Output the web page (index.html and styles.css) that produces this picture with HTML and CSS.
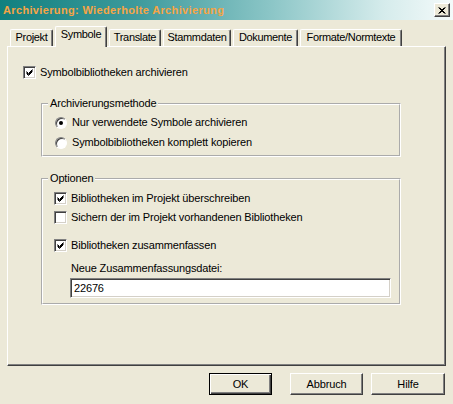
FILE: index.html
```html
<!DOCTYPE html>
<html>
<head>
<meta charset="utf-8">
<title>Archivierung</title>
<link rel="stylesheet" href="styles.css">
</head>
<body>
<div class="titlebar">
  <span class="title">Archivierung: Wiederholte Archivierung</span>
  <span class="close"><svg width="8" height="7" viewBox="0 0 8 7"><path d="M0.5 0.5L6.5 6.5M1.5 0.5L7.5 6.5M6.5 0.5L0.5 6.5M7.5 0.5L1.5 6.5" stroke="#000" stroke-width="1" fill="none"/></svg></span>
</div>
<div class="tabs">
  <div class="tab t1">Projekt</div>
  <div class="tab t2 active">Symbole</div>
  <div class="tab t3">Translate</div>
  <div class="tab t4">Stammdaten</div>
  <div class="tab t5">Dokumente</div>
  <div class="tab t6">Formate/Normtexte</div>
</div>
<div class="panel">
  <div class="row"><span class="box"><svg width="7" height="7" viewBox="0 0 7 7"><path d="M0.5 2.5L2.5 4.5L6.5 0.5M0.5 3.5L2.5 5.5L6.5 1.5M0.5 4.5L2.5 6.5L6.5 2.5" stroke="#000" stroke-width="1" fill="none"/></svg></span>Symbolbibliotheken archivieren</div>
  <fieldset class="group g1">
    <legend>Archivierungsmethode</legend>
    <div class="gbody">
      <div class="row"><span class="radio"><span class="dot"></span></span>Nur verwendete Symbole archivieren</div>
      <div class="row r2"><span class="radio"></span>Symbolbibliotheken komplett kopieren</div>
    </div>
  </fieldset>
  <fieldset class="group g2">
    <legend>Optionen</legend>
    <div class="gbody body2">
      <div class="row"><span class="box"><svg width="7" height="7" viewBox="0 0 7 7"><path d="M0.5 2.5L2.5 4.5L6.5 0.5M0.5 3.5L2.5 5.5L6.5 1.5M0.5 4.5L2.5 6.5L6.5 2.5" stroke="#000" stroke-width="1" fill="none"/></svg></span>Bibliotheken im Projekt überschreiben</div>
      <div class="row o2"><span class="box"></span>Sichern der im Projekt vorhandenen Bibliotheken</div>
      <div class="row o3"><span class="box"><svg width="7" height="7" viewBox="0 0 7 7"><path d="M0.5 2.5L2.5 4.5L6.5 0.5M0.5 3.5L2.5 5.5L6.5 1.5M0.5 4.5L2.5 6.5L6.5 2.5" stroke="#000" stroke-width="1" fill="none"/></svg></span>Bibliotheken zusammenfassen</div>
      <div class="flabel">Neue Zusammenfassungsdatei:</div>
      <div class="input">22676</div>
    </div>
  </fieldset>
</div>
<div class="buttons">
  <div class="btn default ok">OK</div>
  <div class="btn cancel">Abbruch</div>
  <div class="btn help">Hilfe</div>
</div>
</body>
</html>
```
FILE: styles.css
```css
* { box-sizing: border-box; }
html, body { margin: 0; padding: 0; }
body {
  width: 453px;
  height: 404px;
  overflow: hidden;
  background: #ECE9D8;
  font-family: "Liberation Sans", Arial, sans-serif;
  font-size: 11px;
  line-height: 13px;
  letter-spacing: -0.15px;
  color: #000;
}
.titlebar {
  height: 20px;
  display: flex;
  align-items: center;
  justify-content: space-between;
  padding: 0 3px 0 3px;
  background: linear-gradient(to right, #11807f 0%, #3d9a9c 30%, #8cc6c7 60%, #d6ecec 85%, #f4fafa 100%);
}
.title {
  color: #F6A545;
  font-weight: bold;
  font-size: 11px;
  letter-spacing: 0.35px;
}
.close {
  width: 16px;
  height: 14px;
  display: flex;
  align-items: center;
  justify-content: center;
  background: #ECE9D8;
  border: 1px solid;
  border-color: #fff #404040 #404040 #fff;
  box-shadow: inset -1px -1px #808080;
}
.tabs {
  margin-top: 6px;
  height: 20px;
  padding-left: 10px;
  display: flex;
  align-items: flex-end;
  gap: 2px;
  position: relative;
  z-index: 1;
}
.tab {
  flex: none;
  height: 17px;
  padding: 1px 0 0;
  border: 1px solid #fff;
  border-bottom: none;
  border-right-color: #404040;
  box-shadow: inset -1px 0 #808080;
  border-radius: 2px 2px 0 0;
  text-align: center;
  white-space: nowrap;
  letter-spacing: -0.35px;
}
.tab.active {
  height: 21px;
  margin-bottom: -1px;
  background: #ECE9D8;
}
.t1 { width: 43px; }
.t2 { width: 52px; }
.t3 { width: 52px; }
.t4 { width: 68px; }
.t5 { width: 65px; }
.t6 { width: 102px; }
.panel {
  margin-left: 7px;
  width: 439px;
  height: 320px;
  border: 1px solid;
  border-color: #fff #404040 #404040 #fff;
  box-shadow: inset -1px -1px #808080;
  padding: 19px 0 0 15px;
}
.row {
  height: 13px;
  display: flex;
  align-items: center;
  gap: 4px;
  white-space: nowrap;
}
.box {
  width: 13px;
  height: 13px;
  flex: none;
  background: #fff;
  border: 1px solid;
  border-color: #808080 #fff #fff #808080;
  box-shadow: inset 1px 1px #404040, inset -1px -1px #d4d0c8;
  display: flex;
  align-items: center;
  justify-content: center;
}
.radio {
  width: 12px;
  height: 12px;
  flex: none;
  margin-left: 1px;
  margin-right: 1px;
  border-radius: 50%;
  background: #fff;
  border: 1px solid;
  border-color: #808080 #fff #fff #808080;
  box-shadow: inset 1px 1px #404040;
  display: flex;
  align-items: center;
  justify-content: center;
}
.dot {
  width: 4px;
  height: 4px;
  border-radius: 50%;
  background: #000;
}
.group {
  margin: 0 0 0 18px;
  padding: 0;
  width: 360px;
  border: 2px groove #fff;
  min-inline-size: 0;
}
.group legend {
  margin-left: 5px;
  padding: 0 2px;
  line-height: 13px;
}
.g1 { margin-top: 18px; }
.g2 { margin-top: 15px; }
.gbody {
  padding: 6px 0 6px 11px;
}
.r2 { margin-top: 7px; }
.body2 { padding-top: 7px; padding-bottom: 5px; }
.o2 { margin-top: 6px; }
.o3 { margin-top: 15px; }
.flabel {
  margin-top: 10px;
  padding-left: 17px;
  height: 13px;
}
.input {
  margin-top: 3px;
  margin-left: 16px;
  width: 321px;
  height: 20px;
  background: #fff;
  border: 1px solid;
  border-color: #808080 #fff #fff #808080;
  box-shadow: inset 1px 1px #404040, inset -1px -1px #d4d0c8;
  padding: 3px 0 0 3px;
}
.buttons {
  margin-top: 7px;
  display: flex;
  justify-content: flex-end;
  padding-right: 8px;
}
.btn {
  height: 22px;
  display: flex;
  align-items: center;
  justify-content: center;
  border: 1px solid;
  border-color: #fff #404040 #404040 #fff;
  box-shadow: inset -1px -1px #808080;
}
.btn.default {
  border: 1px solid #000;
  box-shadow: inset 1px 1px #fff, inset -1px -1px #404040, inset -2px -2px #808080;
}
.ok { width: 63px; margin-right: 18px; }
.cancel { width: 73px; margin-right: 8px; }
.help { width: 74px; }
```
